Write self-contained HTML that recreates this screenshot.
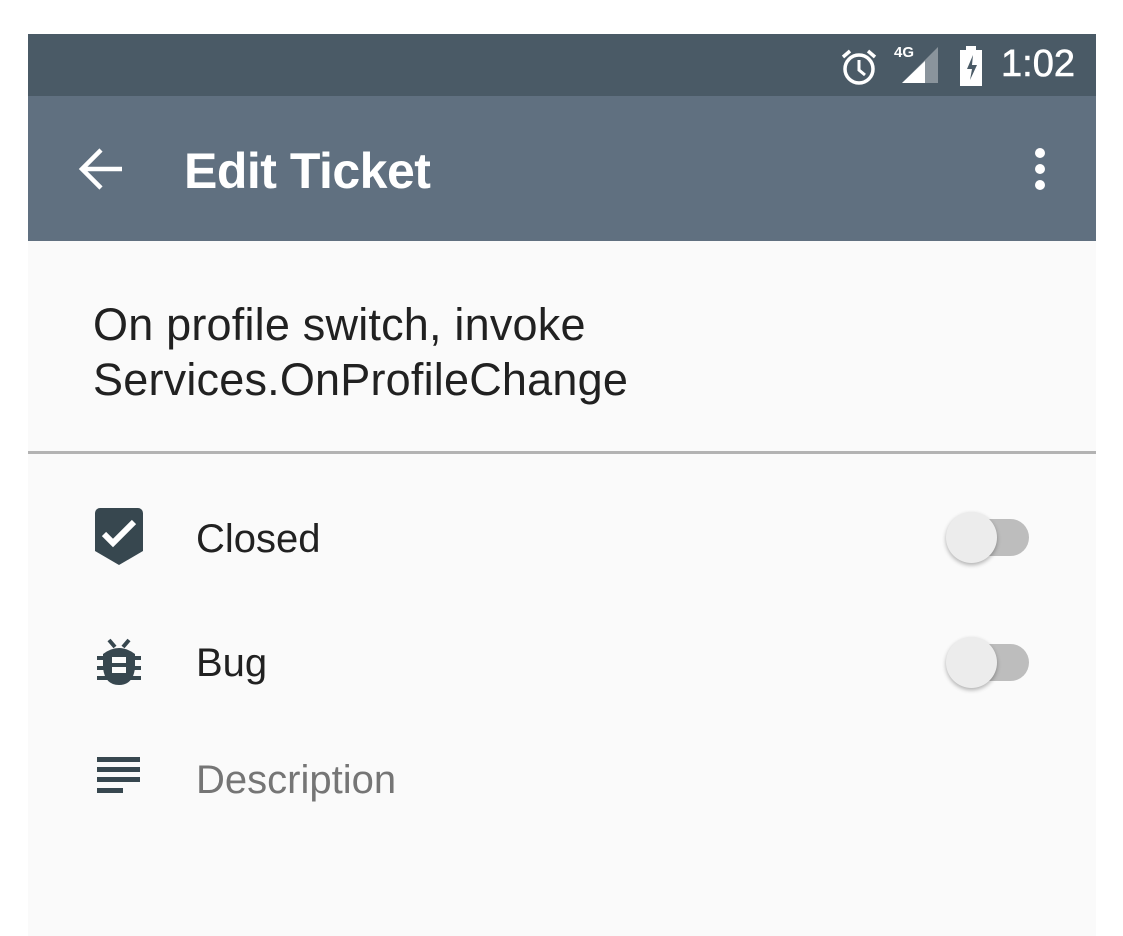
<!DOCTYPE html>
<html><head><meta charset="utf-8"><style>
*{margin:0;padding:0;box-sizing:border-box}
body{width:1123px;height:936px;background:#fff;position:relative;overflow:hidden;font-family:"Liberation Sans",sans-serif}
.phone{position:absolute;left:28px;top:34px;width:1068px;height:902px;background:#fafafa}
.sb{position:absolute;left:0;top:0;width:1068px;height:62px;background:#4a5a66}
.ab{position:absolute;left:0;top:62px;width:1068px;height:145px;background:#607080}
.t{position:absolute;white-space:nowrap}
.sw{position:absolute;width:84px;height:52px}
.sw .tr{position:absolute;left:9px;top:7px;width:74px;height:37px;border-radius:19px;background:#bdbdbd}
.sw .th{position:absolute;left:0;top:0;width:51px;height:51px;border-radius:50%;background:#ececec;box-shadow:0 2px 4px rgba(0,0,0,.3)}
</style></head><body>
<div class="phone">
<div class="sb">
<svg style="position:absolute;left:812px;top:14px" width="40" height="38" viewBox="0 0 40 38"><circle cx="19" cy="21" r="14" fill="none" stroke="#fff" stroke-width="3.5"/><path d="M19 12v10l6 5" fill="none" stroke="#fff" stroke-width="3"/><path d="M3 9l7-6M35 9l-7-6" stroke="#fff" stroke-width="3.5"/></svg>
<span class="t" style="left:866px;top:10px;color:#fff;font-size:15px;font-weight:bold">4G</span>
<svg style="position:absolute;left:872px;top:13px" width="40" height="38"><polygon points="2,36 38,36 38,0" fill="#8a949c"/><polygon points="2,36 25,36 25,14" fill="#fff"/></svg>
<svg style="position:absolute;left:930px;top:12px" width="26" height="40"><rect x="8" y="0" width="10" height="5" fill="#fff"/><rect x="2" y="4" width="22" height="36" fill="#fff"/><path d="M15 9l-6 14h5l-2 11 7-15h-5z" fill="#4a5a66"/></svg>
<span class="t" style="left:973px;top:9px;color:#fff;font-size:38px;-webkit-text-stroke:0.6px #fff">1:02</span>
</div>
<div class="ab">
<svg style="position:absolute;left:50px;top:51px" width="46" height="44"><path d="M44 22H5M23 3L4 22l19 19" fill="none" stroke="#fff" stroke-width="4.5"/></svg>
<span class="t" style="left:156px;top:46px;color:#fff;font-size:50px;font-weight:bold;letter-spacing:-0.5px">Edit Ticket</span>
<svg style="position:absolute;left:1002px;top:50px" width="20" height="46"><circle cx="10" cy="7" r="5" fill="#fff"/><circle cx="10" cy="23" r="5" fill="#fff"/><circle cx="10" cy="39" r="5" fill="#fff"/></svg>
</div>
<div class="t" style="left:65px;top:263px;font-size:45px;line-height:55px;color:#212121;letter-spacing:0.2px">On profile switch, invoke<br>Services.OnProfileChange</div>
<div style="position:absolute;left:0;top:417px;width:1068px;height:3px;background:#b3b3b3"></div>
<svg style="position:absolute;left:67px;top:474px" width="48" height="58"><path d="M5 0h38a5 5 0 0 1 5 5v38L24 57 0 43V5a5 5 0 0 1 5-5z" fill="#37474f"/><path d="M9 26l9 9 21-21" fill="none" stroke="#fff" stroke-width="6"/></svg>
<span class="t" style="left:168px;top:483px;font-size:40px;color:#212121">Closed</span>
<div class="sw" style="left:918px;top:478px"><div class="tr"></div><div class="th"></div></div>
<svg style="position:absolute;left:69px;top:604px" width="44" height="48" viewBox="0 0 44 48"><path d="M12 2l6 7M32 2l-6 7" stroke="#37474f" stroke-width="4"/><path d="M6 16q16-12 32 0v14q-2 17-16 17t-16-17z" fill="#37474f"/><path d="M0 20h44M0 30h44M0 40h44" stroke="#37474f" stroke-width="4"/><rect x="15" y="19" width="14" height="6" fill="#fafafa"/><rect x="15" y="29" width="14" height="6" fill="#fafafa"/></svg>
<span class="t" style="left:168px;top:607px;font-size:40px;color:#212121">Bug</span>
<div class="sw" style="left:918px;top:603px"><div class="tr"></div><div class="th"></div></div>
<svg style="position:absolute;left:69px;top:723px" width="44" height="38"><rect x="0" y="0" width="43" height="5" fill="#37474f"/><rect x="0" y="10" width="43" height="5" fill="#37474f"/><rect x="0" y="20" width="43" height="5" fill="#37474f"/><rect x="0" y="31" width="26" height="5" fill="#37474f"/></svg>
<span class="t" style="left:168px;top:724px;font-size:40px;color:#757575">Description</span>
</div>
</body></html>
